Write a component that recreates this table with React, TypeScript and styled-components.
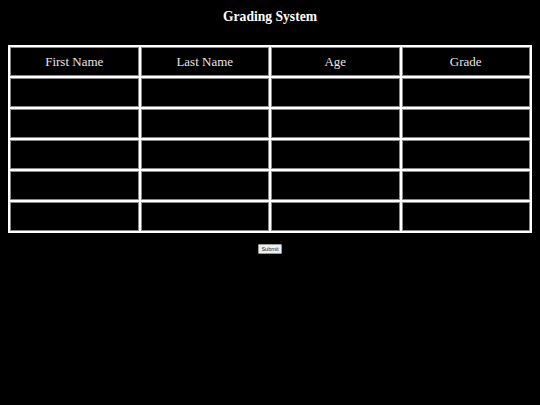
import React from "react";
import styled, { createGlobalStyle } from "styled-components";

const Global = createGlobalStyle`
  html, body { background: #000; }
  body { margin: 8px; font-family: "Liberation Serif", "Times New Roman", serif; }
`;

const Page = styled.div`
  display: flex;
  flex-direction: column;
  align-items: center;
`;

const Title = styled.h1`
  margin: 0 0 20px;
  font-size: 13.6px;
  line-height: 17px;
  font-weight: bold;
  color: #fff;
  text-align: center;
`;

const Grid = styled.table`
  width: 524px;
  background: #fff;
  border-spacing: 2px;
  border: none;
  table-layout: fixed;
`;

const HeadCell = styled.th`
  height: 27px;
  padding: 0;
  background: #000;
  border: 1px solid #8a8a8a;
  color: #e6e6e6;
  font-weight: normal;
  font-size: 13px;
  text-align: center;
  vertical-align: middle;
`;

const Cell = styled.td`
  height: 27px;
  padding: 0;
  background: #000;
  border: 1px solid #8a8a8a;
`;

const SubmitButton = styled.button`
  margin-top: 11px;
  height: 10px;
  padding: 0 2px;
  font-family: "Liberation Sans", Arial, sans-serif;
  font-size: 5.5px;
  line-height: 8px;
  color: #222;
  background: #efefef;
  border: 1px solid #9a9a9a;
  border-radius: 1px;
`;

const headers = ["First Name", "Last Name", "Age", "Grade"];
const rows = [0, 1, 2, 3, 4];

export default function App() {
  return (
    <>
      <Global />
      <Page>
        <Title>Grading System</Title>
        <Grid>
          <thead>
            <tr>
              {headers.map((h) => (
                <HeadCell key={h}>{h}</HeadCell>
              ))}
            </tr>
          </thead>
          <tbody>
            {rows.map((r) => (
              <tr key={r}>
                {headers.map((h) => (
                  <Cell key={h} />
                ))}
              </tr>
            ))}
          </tbody>
        </Grid>
        <SubmitButton>Submit</SubmitButton>
      </Page>
    </>
  );
}
